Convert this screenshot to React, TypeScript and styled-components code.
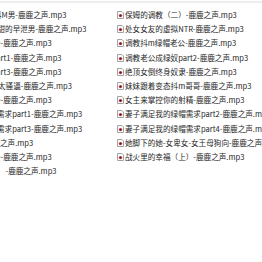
import React from "react";
import styled, { createGlobalStyle } from "styled-components";

const Global = createGlobalStyle`
  html, body { margin: 0; padding: 0; background: #ffffff; }
  body {
    width: 262px; height: 262px; overflow: hidden;
    font-family: "Noto Sans CJK SC", "Noto Sans", sans-serif;
  }
`;

const Window = styled.div`
  width: 262px;
  height: 262px;
  background: #ffffff;
  display: flex;
  flex-direction: column;
  overflow: hidden;
`;

const TopEdge = styled.div`
  height: 4px;
  flex: none;
  background: linear-gradient(#ffffff 0, #ffffff 1px, #e8e8e8 1px, #ececec 2px, #f6f6f6 3px, #ffffff 4px);
`;

const List = styled.div`
  display: flex;
  padding-top: 4px;
`;

const Column = styled.div<{ $width?: number }>`
  display: flex;
  flex-direction: column;
  overflow: hidden;
  ${(p) => (p.$width ? `width: ${p.$width}px; flex: none;` : "flex: 1; min-width: 0;")}
`;

const Row = styled.div`
  height: 14.2px;
  display: flex;
  align-items: center;
  white-space: nowrap;
`;

const Name = styled.span<{ $shift?: number }>`
  font-size: 7.6px;
  line-height: 14px;
  color: #1f1f1f;
  margin-left: ${(p) => p.$shift ?? 0}px;
  white-space: nowrap;
`;

const IconBox = styled.span`
  width: 7px;
  height: 8px;
  flex: none;
  display: inline-flex;
  margin-left: 1px;
  margin-right: 1px;
`;

const AudioIcon = () => (
  <IconBox>
    <svg width="7" height="8" viewBox="0 0 7 8">
      <path d="M0.5 0.5 H5 L6.5 2 V7.5 H0.5 Z" fill="#fbfbfb" stroke="#a3a3a3" strokeWidth="1" />
      <circle cx="3.5" cy="4.6" r="1.7" fill="#c9364a" />
      <circle cx="3.5" cy="4.6" r="0.8" fill="#2b2b2b" />
    </svg>
  </IconBox>
);

const leftRows: { text: string; shift: number }[] = [
  { text: "抖M男-鹿鹿之声.mp3", shift: -6 },
  { text: "甜的早泄男-鹿鹿之声.mp3", shift: -2.5 },
  { text: "公-鹿鹿之声.mp3", shift: -7 },
  { text: "part1-鹿鹿之声.mp3", shift: -8.4 },
  { text: "part3-鹿鹿之声.mp3", shift: -8.4 },
  { text: "太骚逼-鹿鹿之声.mp3", shift: -2 },
  { text: "公-鹿鹿之声.mp3", shift: -7 },
  { text: "需求part1-鹿鹿之声.mp3", shift: -3 },
  { text: "需求part3-鹿鹿之声.mp3", shift: -3 },
  { text: "之声.mp3", shift: 0 },
  { text: "公-鹿鹿之声.mp3", shift: -7 },
  { text: "-鹿鹿之声.mp3", shift: 5.5 },
];

const rightRows: string[] = [
  "保姆的调教（二）-鹿鹿之声.mp3",
  "处女女友的虚拟NTR-鹿鹿之声.mp3",
  "调教抖m绿帽老公-鹿鹿之声.mp3",
  "调教老公成绿奴part2-鹿鹿之声.mp3",
  "绝顶女倒终身奴隶-鹿鹿之声.mp3",
  "妹妹跟着变态抖m哥哥-鹿鹿之声.mp3",
  "女主来掌控你的射精-鹿鹿之声.mp3",
  "妻子满足我的绿帽需求part2-鹿鹿之声.mp3",
  "妻子满足我的绿帽需求part4-鹿鹿之声.mp3",
  "她脚下的她-女卑女-女王母狗向-鹿鹿之声.mp3",
  "战火里的幸福（上）-鹿鹿之声.mp3",
];

export default function App() {
  return (
    <Window>
      <Global />
      <TopEdge />
      <List>
        <Column $width={116}>
          {leftRows.map((r, i) => (
            <Row key={i}>
              <Name $shift={r.shift}>{r.text}</Name>
            </Row>
          ))}
        </Column>
        <Column>
          {rightRows.map((t, i) => (
            <Row key={i}>
              <AudioIcon />
              <Name>{t}</Name>
            </Row>
          ))}
        </Column>
      </List>
    </Window>
  );
}
